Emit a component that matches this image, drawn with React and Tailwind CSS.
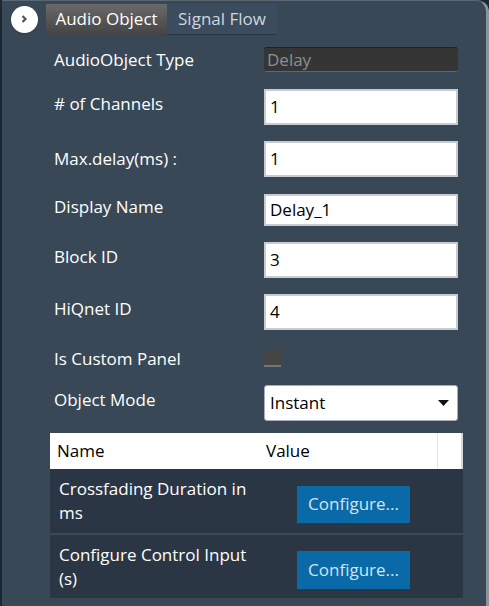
import React from "react";

const Field = ({ label, children, className = "", lift = false }) => (
  <div className={`flex items-center ${className}`}>
    <div className={`w-[262px] pl-[52px] text-[17px] text-white ${lift ? "-mt-[6px]" : ""}`}>{label}</div>
    <div className="w-[194px]">{children}</div>
  </div>
);

const TextBox = ({ value, h = "h-[36px]" }) => (
  <div className={`${h} w-full bg-white border-2 border-[#c8ccd2] flex items-center pl-[4px] text-[17px] text-black`}>
    {value}
  </div>
);

export default function App() {
  return (
    <div
      className="w-[489px] h-[606px] bg-[#1d2731] flex"
      style={{ fontFamily: '"Open Sans", "Noto Sans", sans-serif' }}
    >
      <div className="ml-[2px] flex-1 bg-[#394856] rounded-tr-[12px] border-r-[3px] border-t border-[#8b939b] border-t-[#5c6670] relative">
        {/* tab strip */}
        <div className="flex items-center h-[34px] pt-[2px]">
          <div className="w-[44px] flex justify-center">
            <div className="w-[27px] h-[27px] rounded-full bg-white flex items-center justify-center shadow">
              <svg width="10" height="10" viewBox="0 0 10 10">
                <path d="M3.5 2 L6.5 5 L3.5 8" stroke="#555" strokeWidth="2.2" fill="none" />
              </svg>
            </div>
          </div>
          <div className="h-[31px] w-[121px] bg-gradient-to-b from-[#6a6a6a] to-[#444] flex items-center justify-center text-white text-[17px]">
            Audio Object
          </div>
          <div className="h-[31px] w-[110px] bg-[#3b4c5e] border-b border-[#2a3440] flex items-center justify-center text-[#cfd6dd] text-[17px]">
            Signal Flow
          </div>
        </div>

        <div className="flex flex-col">
          <Field label="AudioObject Type" className="mt-[12px]">
            <div className="h-[25px] w-full bg-[#353535] rounded-[3px] border-t border-[#222] border-b border-b-[#666] flex items-center pl-[3px] text-[17px] text-[#8a8f94]">
              Delay
            </div>
          </Field>
          <Field label="# of Channels" className="mt-[16px]" lift>
            <TextBox value="1" />
          </Field>
          <Field label="Max.delay(ms) :" className="mt-[16px]">
            <TextBox value="1" />
          </Field>
          <Field label="Display Name" className="mt-[17px]" lift>
            <TextBox value="Delay_1" h="h-[32px]" />
          </Field>
          <Field label="Block ID" className="mt-[16px]" lift>
            <TextBox value="3" />
          </Field>
          <Field label="HiQnet ID" className="mt-[16px]" lift>
            <TextBox value="4" />
          </Field>
          <Field label="Is Custom Panel" className="mt-[16px]">
            <div className="w-[17px] h-[17px] bg-[#454545] border-b-2 border-[#777]" />
          </Field>
          <Field label="Object Mode" className="mt-[14px]" lift>
            <div className="h-[36px] w-full bg-white rounded-[3px] border border-[#aab] flex items-center justify-between pl-[5px] pr-[8px] text-[17px] text-black">
              <span>Instant</span>
              <svg width="11" height="6" viewBox="0 0 11 6">
                <path d="M0 0 L11 0 L5.5 6 Z" fill="#111" />
              </svg>
            </div>
          </Field>

          {/* property grid */}
          <div className="ml-[48px] mt-[12px] w-[413px] flex flex-col">
            <div className="h-[36px] bg-white flex items-center text-[17px] text-black">
              <div className="w-[216px] pl-[7px]">Name</div>
              <div className="w-[171px]">Value</div>
              <div className="h-full w-[1px] bg-[#e4e4e4]" />
              <div className="flex-1 h-full border-r-2 border-[#d8d8d8]" />
            </div>
            <div className="h-[64px] bg-[#2a3644] flex items-center text-[17px] text-white">
              <div className="w-[205px] pl-[9px] leading-[24px]">Crossfading Duration in ms</div>
              <button className="ml-[42px] mt-[6px] h-[37px] w-[113px] bg-[#0a6aa8] text-[#d6e2ee] text-[17px]">Configure...</button>
            </div>
            <div className="h-[2px] bg-[#3c4a58]" />
            <div className="h-[63px] bg-[#2a3644] flex items-center text-[17px] text-white">
              <div className="w-[205px] pl-[9px] leading-[24px]">Configure Control Input (s)</div>
              <button className="ml-[42px] mt-[6px] h-[38px] w-[113px] bg-[#0a6aa8] text-[#d6e2ee] text-[17px]">Configure...</button>
            </div>
          </div>
        </div>
      </div>
    </div>
  );
}
